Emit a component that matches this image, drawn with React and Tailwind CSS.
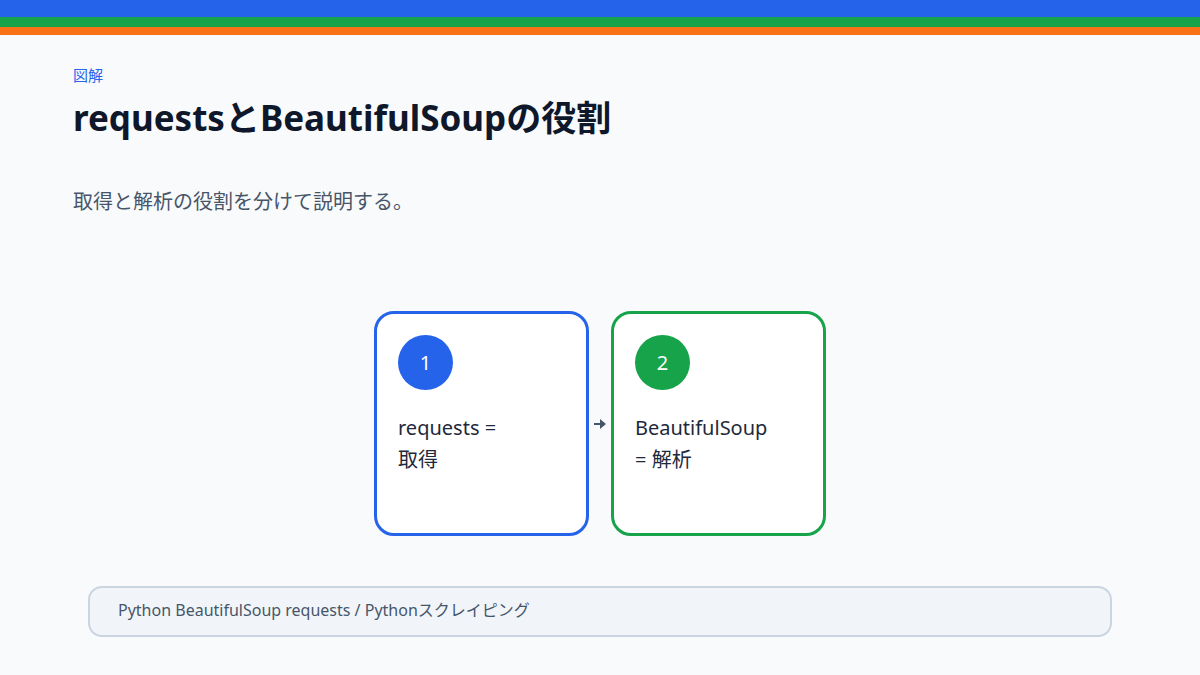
export default function App() {
  const font = { fontFamily: '"Noto Sans", "Noto Sans CJK JP", sans-serif' };
  return (
    <div className="w-[1200px] h-[675px] bg-[#f8fafc] flex flex-col overflow-hidden" style={font}>
      <div className="h-[17px] bg-[#2563eb]" />
      <div className="h-[10px] bg-[#16a34a]" />
      <div className="h-[8px] bg-[#f97316]" />
      <div className="px-[73px] pt-[29px]">
        <div className="text-[15px] leading-[22px] text-[#2563eb]">図解</div>
        <h1 className="mt-[8px] text-[35px] leading-[48px] font-bold text-[#0f172a]">requestsとBeautifulSoupの役割</h1>
        <p className="mt-[45px] text-[20px] leading-[30px] text-[#475569]">取得と解析の役割を分けて説明する。</p>
      </div>
      <div className="flex justify-center items-center mt-[94px]">
        <div className="w-[215px] h-[225px] rounded-[20px] border-[3px] border-[#2563eb] bg-white px-[21px] pt-[21px]">
          <div className="w-[55px] h-[55px] rounded-full bg-[#2563eb] text-white text-[20px] flex items-center justify-center">1</div>
          <div className="mt-[22px] text-[20px] leading-[32px] text-[#1e293b]">requests =<br />取得</div>
        </div>
        <div className="w-[22px] flex justify-center">
          <svg width="14" height="12" viewBox="0 0 14 12"><path d="M1 6h7" stroke="#475569" strokeWidth="2" /><path d="M7 1l6 5-6 5z" fill="#475569" /></svg>
        </div>
        <div className="w-[215px] h-[225px] rounded-[20px] border-[3px] border-[#16a34a] bg-white px-[21px] pt-[21px]">
          <div className="w-[55px] h-[55px] rounded-full bg-[#16a34a] text-white text-[20px] flex items-center justify-center">2</div>
          <div className="mt-[22px] text-[20px] leading-[32px] text-[#1e293b]">BeautifulSoup<br />= 解析</div>
        </div>
      </div>
      <div className="mx-[88px] mt-[50px] h-[51px] rounded-[14px] border-2 border-[#cbd5e1] bg-[#f1f5f9] px-[28px] flex items-center text-[16px] text-[#475569] pb-[4px]">
        Python BeautifulSoup requests / Pythonスクレイピング
      </div>
    </div>
  );
}
